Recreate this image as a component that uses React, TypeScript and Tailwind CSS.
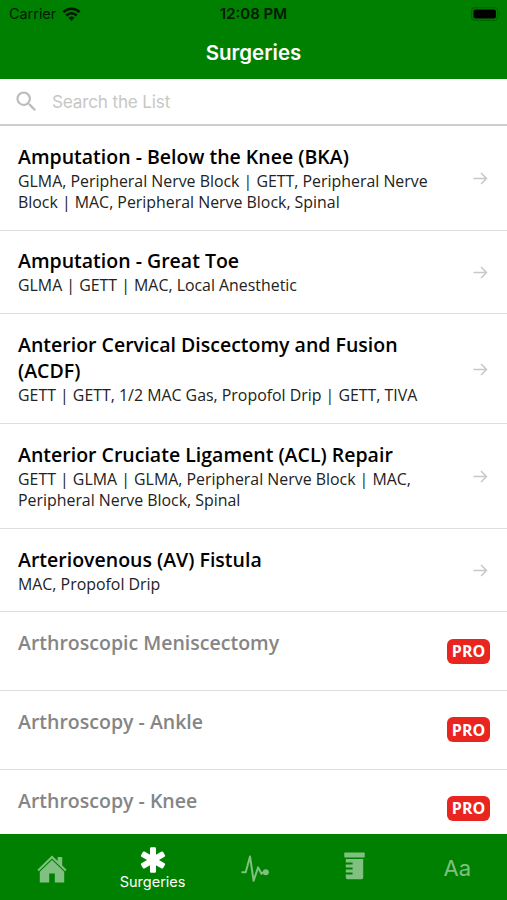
import { MdSearch } from 'react-icons/md'

type Surgery = {
  name: string
  options?: string
  pro?: boolean
}

const surgeries: Surgery[] = [
  {
    name: 'Amputation - Below the Knee (BKA)',
    options: 'GLMA, Peripheral Nerve Block | GETT, Peripheral Nerve Block | MAC, Peripheral Nerve Block, Spinal',
  },
  { name: 'Amputation - Great Toe', options: 'GLMA | GETT | MAC, Local Anesthetic' },
  {
    name: 'Anterior Cervical Discectomy and Fusion (ACDF)',
    options: 'GETT | GETT, 1/2 MAC Gas, Propofol Drip | GETT, TIVA',
  },
  {
    name: 'Anterior Cruciate Ligament (ACL) Repair',
    options: 'GETT | GLMA | GLMA, Peripheral Nerve Block | MAC, Peripheral Nerve Block, Spinal',
  },
  { name: 'Arteriovenous (AV) Fistula', options: 'MAC, Propofol Drip' },
  { name: 'Arthroscopic Meniscectomy', pro: true },
  { name: 'Arthroscopy - Ankle', pro: true },
  { name: 'Arthroscopy - Knee', pro: true },
]

function WifiIcon() {
  return (
    <svg width="19" height="14" viewBox="0 0 18 14" fill="none" stroke="#001a00" strokeWidth="2.6">
      <path d="M0.9 5.1a11.4 11.4 0 0 1 16.2 0" />
      <path d="M3.8 8.5a7.3 7.3 0 0 1 10.4 0" />
      <path d="M9 13.9 6 10.8a4.2 4.2 0 0 1 6 0Z" fill="#001a00" stroke="none" />
    </svg>
  )
}

function BatteryIcon() {
  return (
    <svg width="30" height="14" viewBox="0 0 30 14">
      <rect x="0.7" y="0.7" width="26" height="12.6" rx="3.5" fill="none" stroke="#006400" strokeWidth="1.2" />
      <rect x="2.5" y="2.6" width="22.4" height="8.8" rx="2" fill="#000" />
      <path d="M28 4.8c1.6.8 1.6 3.6 0 4.4z" fill="#006400" />
    </svg>
  )
}

function ArrowIcon() {
  return (
    <svg width="15" height="13" viewBox="0 0 15 13" fill="none" stroke="#c8c8c8" strokeWidth="1.5">
      <path d="M0.5 6.5h12.8M8 1l5.5 5.5L8 12" />
    </svg>
  )
}

function HomeIcon() {
  return (
    <svg width="30" height="28" viewBox="0 0 30 28" fill="currentColor">
      <path d="M15 0.5 20.6 5.9V2h4.6v8.4l4.4 4.3-1.4 1.5L15 3.5 1.8 16.2.4 14.7z" />
      <path d="M15 5 27.2 16.7V27.5h-9.4v-9h-5.6v9H2.8V16.7z" />
    </svg>
  )
}

function AsteriskIcon() {
  return (
    <svg width="26" height="26" viewBox="0 0 26 26" fill="currentColor">
      <rect x="10" y="0.2" width="6" height="25.6" rx="1.2" />
      <rect x="10" y="0.2" width="6" height="25.6" rx="1.2" transform="rotate(60 13 13)" />
      <rect x="10" y="0.2" width="6" height="25.6" rx="1.2" transform="rotate(120 13 13)" />
    </svg>
  )
}

function PulseIcon() {
  return (
    <svg width="28" height="28" viewBox="0 0 28 28">
      <path
        d="M0.5 17.3h4.2L9 1.5l3.6 24.3 4.5-13.4 3.4 6.4 1.8-1.6H25"
        fill="none"
        stroke="currentColor"
        strokeWidth="2"
        strokeLinejoin="round"
      />
      <circle cx="24.8" cy="17.2" r="3" fill="currentColor" />
    </svg>
  )
}

function BeakerIcon() {
  return (
    <svg width="21" height="28" viewBox="0 0 21 28" fill="currentColor">
      <rect x="0.3" y="0.4" width="20.4" height="5.2" rx="0.8" />
      <path d="M1.8 7h17.4v18.6a1.6 1.6 0 0 1-1.6 1.6H3.4a1.6 1.6 0 0 1-1.6-1.6v-3.2h6.8v-1.8H1.8v-3.2h6.8v-1.8H1.8v-3.2h6.8v-1.8H1.8z" />
    </svg>
  )
}

function SurgeryRow({ surgery }: { surgery: Surgery }) {
  return (
    <li
      className={`flex shrink-0 items-center border-b border-[#dedede] pl-[18px] ${
        surgery.pro ? 'h-[78.6px] pr-[17px]' : 'pt-[17.6px] pr-[19px] pb-[16.3px]'
      }`}
    >
      <div className={`flex-1 ${surgery.pro ? 'self-start pt-[18px] text-[#858585]' : 'pr-[30px]'}`}>
        <h2 className="text-[19.52px] leading-[26.6px] font-semibold">{surgery.name}</h2>
        {surgery.options && (
          <p className="pt-[0.4px] text-[15.9px] leading-[21.5px] text-[#222]">{surgery.options}</p>
        )}
      </div>
      {surgery.pro ? (
        <span className="flex h-[25px] w-[43px] items-center justify-center rounded-[6px] bg-[#e8251f] text-[16px] font-bold text-white">
          PRO
        </span>
      ) : (
        <ArrowIcon />
      )}
    </li>
  )
}

export default function App() {
  return (
    <main className="flex h-[900px] w-[507px] flex-col overflow-hidden bg-white font-['Open_Sans',sans-serif]">
      <header className="h-[79px] shrink-0 bg-[#008000] font-['Inter',sans-serif]">
        <div className="grid h-[28px] grid-cols-3 items-center pr-[6px] pl-[9px] text-[14.4px] text-[#001a00]">
          <div className="flex items-center gap-[6px]">
            <span>Carrier</span>
            <WifiIcon />
          </div>
          <span className="pr-[3px] text-center text-[15px] font-semibold">12:08 PM</span>
          <div className="flex justify-end">
            <BatteryIcon />
          </div>
        </div>
        <h1 className="text-center text-[20.5px] leading-[49px] font-semibold text-white">Surgeries</h1>
      </header>

      <div className="flex h-[47px] shrink-0 items-center border-b-2 border-[#cdcdcd] pl-[13px] font-['Inter',sans-serif]">
        <MdSearch className="size-[27px] text-[#bdbdbd]" />
        <input
          type="text"
          placeholder="Search the List"
          className="ml-[12px] flex-1 pt-px text-[17.2px] tracking-[-0.2px] outline-none placeholder:text-[#c7c7c7]"
        />
      </div>

      <ul className="flex min-h-0 flex-1 flex-col overflow-hidden">
        {surgeries.map((surgery) => (
          <SurgeryRow key={surgery.name} surgery={surgery} />
        ))}
      </ul>

      <nav className="grid h-[66px] shrink-0 grid-cols-5 items-center bg-[#008000] pt-[3px] font-['Inter',sans-serif] text-[#80c080]">
        <div className="flex justify-center pl-[2px]">
          <HomeIcon />
        </div>
        <div className="flex flex-col items-center pl-px text-white">
          <AsteriskIcon />
          <span className="text-[14.5px] leading-[17px]">Surgeries</span>
        </div>
        <div className="flex justify-center pl-[4px]">
          <PulseIcon />
        </div>
        <div className="flex justify-center pb-[6px]">
          <BeakerIcon />
        </div>
        <span className="pl-[2px] text-center text-[22px]">Aa</span>
      </nav>
    </main>
  )
}
